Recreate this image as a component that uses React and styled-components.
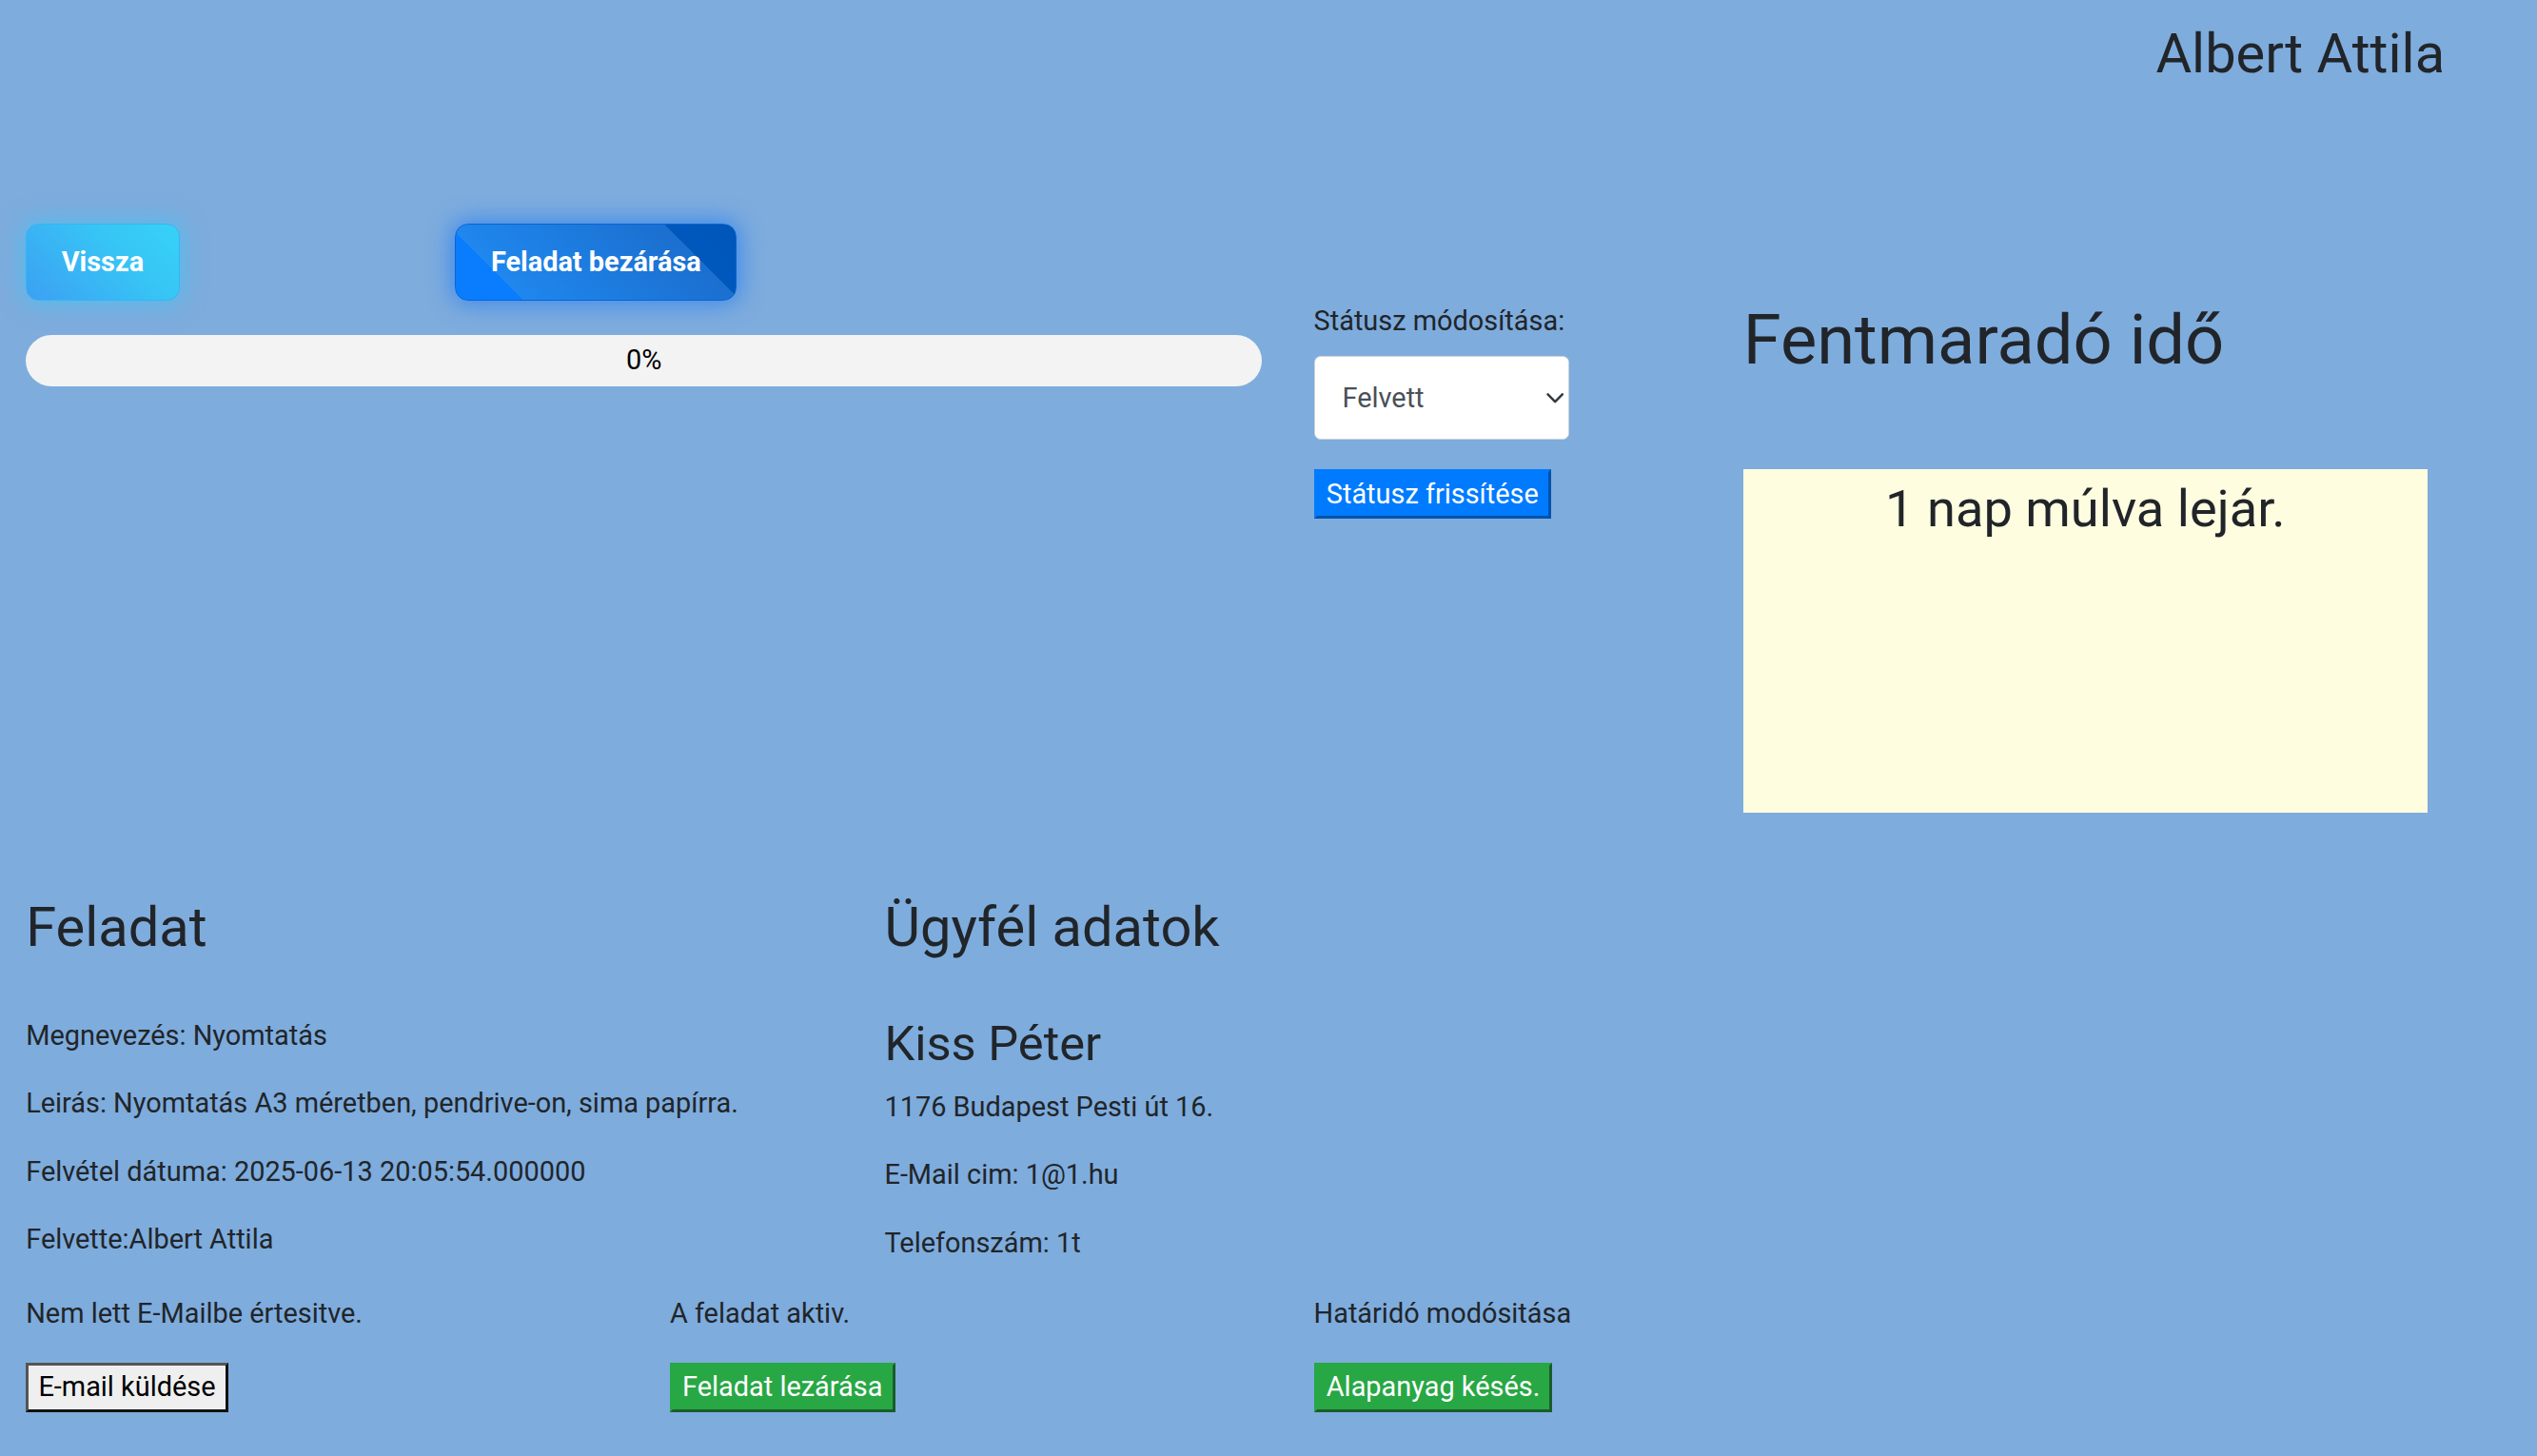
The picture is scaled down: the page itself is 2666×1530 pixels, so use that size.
import React from "react";
import styled, { createGlobalStyle } from "styled-components";

const SCALE = 2666 / 1568;

const GlobalStyle = createGlobalStyle`
  html, body {
    margin: 0;
    padding: 0;
    background: #7eacdd;
  }
  body {
    font-family: Roboto, "Noto Sans", "Liberation Sans", sans-serif;
    color: #212529;
    font-size: 17px;
    line-height: 1.5;
  }
  * { box-sizing: border-box; }
`;

const Page = styled.div`
  zoom: ${SCALE};
  width: 1568px;
  min-height: 900px;
  overflow: hidden;
  background: #7eacdd;
`;

const Header = styled.header`
  display: flex;
  justify-content: flex-end;
  padding: 13px 57px 0 0;
`;

const UserName = styled.h2`
  margin: 0;
  font-size: 34px;
  font-weight: 400;
  line-height: 40.8px;
`;

const ActionRow = styled.div`
  display: grid;
  grid-template-columns: repeat(3, 265.33px);
  margin-top: 84.2px;
`;

const ActionCell = styled.div`
  padding: 0 16px;
`;

const GlowButton = styled.button`
  height: 48px;
  padding: 0 21.5px;
  border: 1px solid ${(p) => (p.$variant === "cyan" ? "#35b6f2" : "#0566d6")};
  border-radius: 8px;
  color: #fff;
  font-family: Roboto, "Noto Sans", sans-serif;
  font-weight: 700;
  font-size: 17px;
  cursor: pointer;
  background: ${(p) =>
    p.$variant === "cyan"
      ? "linear-gradient(45deg, #3ca0f3 0%, #37c4f5 60%, #36d2f7 100%)"
      : "linear-gradient(45deg, #0a7cfe 0%, #0a7cfe 19%, #1f87ee 19%, #1b6fcf 80%, #0058bd 80%, #0055b8 100%)"};
  box-shadow: ${(p) =>
    p.$variant === "cyan"
      ? "0 0 14px 2px rgba(52, 200, 250, 0.55)"
      : "0 0 14px 2px rgba(10, 110, 250, 0.55)"};
`;

const TopRow = styled.div`
  display: grid;
  grid-template-columns: 796px 265.33px 530.67px;
  align-items: start;
`;

const Column = styled.div`
  padding: 0 16px;
`;

const Progress = styled.div`
  margin-top: 21px;
  height: 32px;
  border-radius: 16px;
  background: #f3f3f3;
  display: flex;
  align-items: center;
  justify-content: center;
  color: #000;
  font-size: 17px;
`;

const FieldLabel = styled.label`
  display: block;
  font-size: 17px;
  line-height: 25.5px;
`;

const SelectWrap = styled.div`
  position: relative;
  width: 158px;
  margin-top: 8.5px;
`;

const Select = styled.select`
  appearance: none;
  -webkit-appearance: none;
  width: 158px;
  height: 52px;
  padding: 0 30px 0 17px;
  border: 1px solid #ced4da;
  border-radius: 4px;
  background: #fff;
  color: #495057;
  font-family: Roboto, "Noto Sans", sans-serif;
  font-size: 17px;
  outline: none;
`;

const Chevron = styled.svg`
  position: absolute;
  right: 3px;
  top: 21px;
  pointer-events: none;
`;

const toneBg = { blue: "#007bff", green: "#28a745", light: "#efefef" };
const toneLight = { blue: "#007bff", green: "#28a745", light: "#555555" };
const toneDark = { blue: "#0052aa", green: "#1a5c2c", light: "#111111" };

const FlatButton = styled.button`
  display: inline-block;
  padding: 1.5px 6px;
  font-family: Roboto, "Noto Sans", sans-serif;
  font-size: 17px;
  line-height: 24px;
  border-width: 2px;
  border-style: solid;
  color: ${(p) => (p.$tone === "light" ? "#000" : "#fff")};
  background: ${(p) => toneBg[p.$tone]};
  border-top-color: ${(p) => toneLight[p.$tone]};
  border-left-color: ${(p) => toneLight[p.$tone]};
  border-bottom-color: ${(p) => toneDark[p.$tone]};
  border-right-color: ${(p) => toneDark[p.$tone]};
  cursor: pointer;
`;

const StatusButton = styled(FlatButton)`
  margin-top: 18px;
`;

const BigTitle = styled.h1`
  margin: -1px 0 0;
  font-size: 42.5px;
  font-weight: 400;
  line-height: 51px;
`;

const DeadlineBox = styled.div`
  margin-top: 54px;
  width: 423px;
  height: 212px;
  background: #fffde0;
  padding-top: 5px;
  text-align: center;
`;

const DeadlineText = styled.h3`
  margin: 0;
  font-size: 31.9px;
  font-weight: 400;
  line-height: 1.2;
`;

const InfoRow = styled.div`
  display: grid;
  grid-template-columns: repeat(3, 530.67px);
  margin-top: 51px;
`;

const SectionTitle = styled.h2`
  margin: 0 0 33.7px;
  font-size: 34px;
  font-weight: 400;
  line-height: 40.8px;
`;

const ClientName = styled.h3`
  margin: 0 0 8.5px;
  font-size: 29.75px;
  font-weight: 400;
  line-height: 35.7px;
`;

const Line = styled.p`
  margin: 0 0 16.5px;
  font-size: 17px;
  line-height: 25.5px;
`;

const FooterRow = styled.div`
  display: grid;
  grid-template-columns: repeat(4, 398px);
  margin-top: 1.5px;
`;

const FooterCell = styled.div`
  padding: 0 16px;
  display: flex;
  flex-direction: column;
  align-items: flex-start;
  gap: 17.5px;
`;

const FooterLabel = styled.span`
  font-size: 17px;
  line-height: 25.5px;
`;

export default function App() {
  return (
    <>
      <GlobalStyle />
      <Page>
        <Header>
          <UserName>Albert Attila</UserName>
        </Header>

        <ActionRow>
          <ActionCell>
            <GlowButton $variant="cyan">Vissza</GlowButton>
          </ActionCell>
          <ActionCell>
            <GlowButton $variant="blue">Feladat bezárása</GlowButton>
          </ActionCell>
        </ActionRow>

        <TopRow>
          <Column>
            <Progress>0%</Progress>
          </Column>
          <Column>
            <FieldLabel htmlFor="status">Státusz módosítása:</FieldLabel>
            <SelectWrap>
              <Select id="status" defaultValue="Felvett">
                <option>Felvett</option>
                <option>Folyamatban</option>
                <option>Kész</option>
              </Select>
              <Chevron width="12" height="9" viewBox="0 0 16 12">
                <path
                  d="M2 3.5l6 6 6-6"
                  fill="none"
                  stroke="#343a40"
                  strokeWidth="2"
                  strokeLinecap="round"
                  strokeLinejoin="round"
                />
              </Chevron>
            </SelectWrap>
            <StatusButton $tone="blue">Státusz frissítése</StatusButton>
          </Column>
          <Column>
            <BigTitle>Fentmaradó idő</BigTitle>
            <DeadlineBox>
              <DeadlineText>1 nap múlva lejár.</DeadlineText>
            </DeadlineBox>
          </Column>
        </TopRow>

        <InfoRow>
          <Column>
            <SectionTitle>Feladat</SectionTitle>
            <Line>Megnevezés: Nyomtatás</Line>
            <Line>Leirás: Nyomtatás A3 méretben, pendrive-on, sima papírra.</Line>
            <Line>Felvétel dátuma: 2025-06-13 20:05:54.000000</Line>
            <Line>Felvette:Albert Attila</Line>
          </Column>
          <Column>
            <SectionTitle>Ügyfél adatok</SectionTitle>
            <ClientName>Kiss Péter</ClientName>
            <Line>1176 Budapest Pesti út 16.</Line>
            <Line>E-Mail cim: 1@1.hu</Line>
            <Line>Telefonszám: 1t</Line>
          </Column>
        </InfoRow>

        <FooterRow>
          <FooterCell>
            <FooterLabel>Nem lett E-Mailbe értesitve.</FooterLabel>
            <FlatButton $tone="light">E-mail küldése</FlatButton>
          </FooterCell>
          <FooterCell>
            <FooterLabel>A feladat aktiv.</FooterLabel>
            <FlatButton $tone="green">Feladat lezárása</FlatButton>
          </FooterCell>
          <FooterCell>
            <FooterLabel>Határidó modósitása</FooterLabel>
            <FlatButton $tone="green">Alapanyag késés.</FlatButton>
          </FooterCell>
        </FooterRow>
      </Page>
    </>
  );
}
